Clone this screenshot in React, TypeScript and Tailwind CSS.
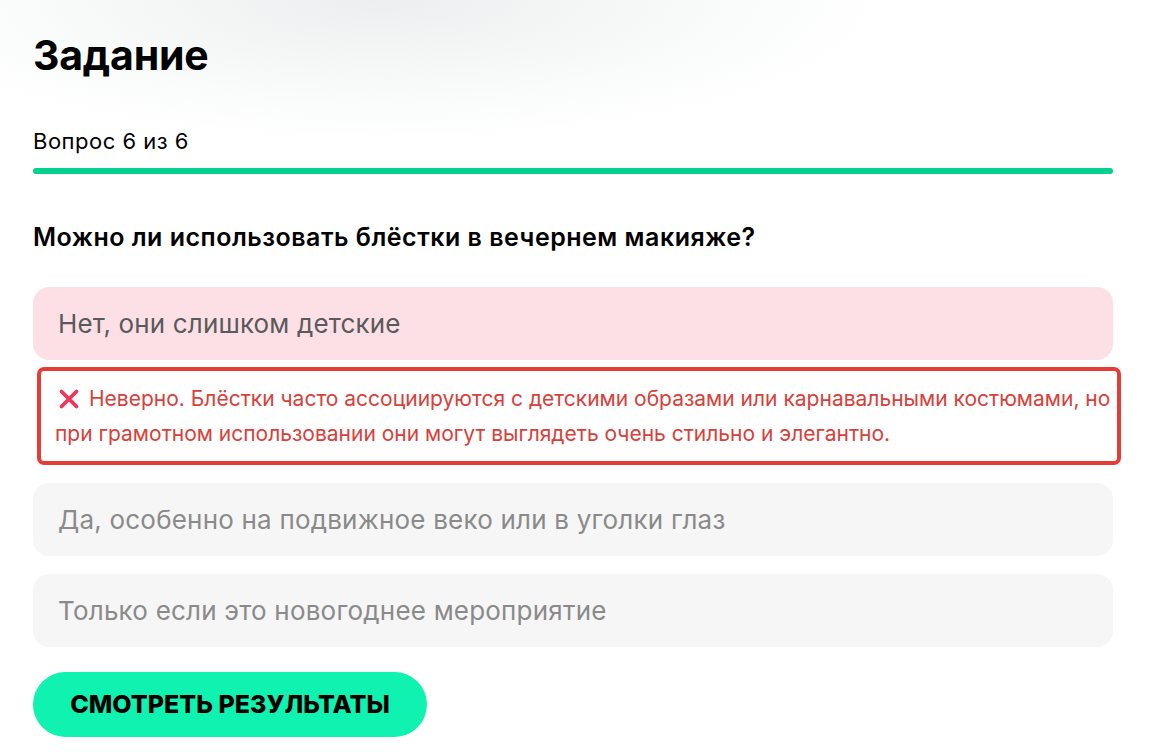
const options = [
  { text: 'Нет, они слишком детские', wrong: true },
  { text: 'Да, особенно на подвижное веко или в уголки глаз', wrong: false },
  { text: 'Только если это новогоднее мероприятие', wrong: false },
];

function CrossIcon() {
  return (
    <svg width="22" height="22" viewBox="0 0 22 22" className="inline-block align-[-4px] ml-[3px] mr-[9px]">
      <path d="M3.5 3.5L18.5 18.5M18.5 3.5L3.5 18.5" stroke="#f3345a" strokeWidth="3.8" strokeLinecap="round" />
    </svg>
  );
}

export default function App() {
  return (
    <div
      className="min-h-[754px] w-full bg-white bg-[radial-gradient(ellipse_500px_140px_at_380px_0px,#eceeef_0%,#f5f7f7_45%,#ffffff_100%)] text-black"
      style={{ fontFamily: 'Inter, "Noto Sans", sans-serif' }}
    >
      <div className="w-[1080px] ml-[33px] pt-[30px]">
        <h1 className="text-[41px] leading-[50px] font-bold tracking-[-0.2px]">Задание</h1>

        <div className="mt-[48px] text-[22px] leading-[26px] tracking-[0.5px]">Вопрос 6 из 6</div>
        <div className="mt-[14px] h-[6px] w-full rounded-full bg-[#e6e6e6]">
          <div className="h-[6px] w-full rounded-full bg-[#00d18f]" />
        </div>

        <h2 className="mt-[49px] text-[25px] leading-[28px] font-semibold tracking-[0.5px]">
          Можно ли использовать блёстки в вечернем макияже?
        </h2>

        <div className="mt-[36px] flex flex-col">
          <div className="h-[73px] rounded-[16px] bg-[#fde0e6] px-[25px] flex items-center text-[26px] tracking-[0.15px] text-[#5a5a5a]">
            {options[0].text}
          </div>

          <div className="mt-[7px] ml-[4px] w-[1084px] rounded-[7px] border-4 border-[#e53d35] pl-[14px] pr-[4px] py-[10px] text-[21px] leading-[35px] text-[#d8403a] whitespace-nowrap">
            <CrossIcon />
            Неверно. Блёстки часто ассоциируются с детскими образами или карнавальными костюмами, но
            <br />
            при грамотном использовании они могут выглядеть очень стильно и элегантно.
          </div>

          <div className="mt-[18px] flex flex-col gap-[18px]">
            {options.slice(1).map((o) => (
              <div
                key={o.text}
                className="h-[73px] rounded-[16px] bg-[#f6f6f6] px-[25px] flex items-center text-[26px] tracking-[0.2px] text-[#8a8a8a]"
              >
                {o.text}
              </div>
            ))}
          </div>
        </div>

        <button className="mt-[25px] h-[65px] w-[394px] rounded-full bg-[#10f2b0] text-[25px] font-extrabold uppercase text-black">
          Смотреть результаты
        </button>
      </div>
    </div>
  );
}
